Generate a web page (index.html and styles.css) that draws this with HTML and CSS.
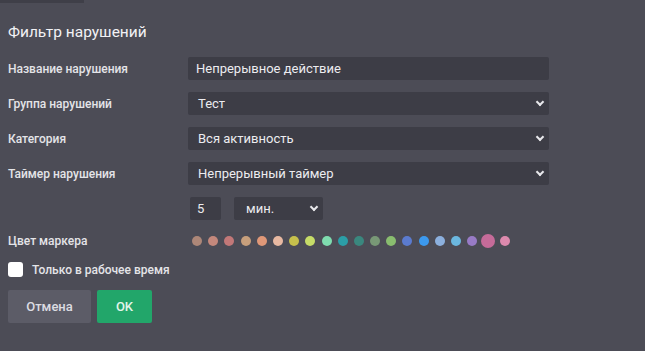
FILE: index.html
```html
<!DOCTYPE html>
<html lang="ru">
<head>
    <meta charset="UTF-8">
    <meta name="viewport" content="width=device-width, initial-scale=1.0">
    <title>Фильтр нарушений</title>
    <link rel="stylesheet" href="styles.css">
</head>
<body>
    <div class="tabline"><span class="tab"></span></div>
    <div class="dialog">
        <h2>Фильтр нарушений</h2>

        <div class="form">
            <label>Название нарушения</label>
            <div class="field">Непрерывное действие</div>

            <label>Группа нарушений</label>
            <div class="field select">Тест</div>

            <label>Категория</label>
            <div class="field select">Вся активность</div>

            <label>Таймер нарушения</label>
            <div class="field select">Непрерывный таймер</div>

            <span></span>
            <div class="timer">
                <div class="field num">5</div>
                <div class="field select unit">мин.</div>
            </div>

            <label class="color-label">Цвет маркера</label>
            <div class="colors">
                <span class="dot" style="background:#ad8778"></span>
                <span class="dot" style="background:#c4887c"></span>
                <span class="dot" style="background:#c27878"></span>
                <span class="dot" style="background:#c79f7c"></span>
                <span class="dot" style="background:#e09878"></span>
                <span class="dot" style="background:#e8b9a2"></span>
                <span class="dot" style="background:#c6c04c"></span>
                <span class="dot" style="background:#c6dc68"></span>
                <span class="dot" style="background:#7fdcaf"></span>
                <span class="dot" style="background:#2b9ea7"></span>
                <span class="dot" style="background:#3a877e"></span>
                <span class="dot" style="background:#789876"></span>
                <span class="dot" style="background:#89bd6f"></span>
                <span class="dot" style="background:#5b7bcf"></span>
                <span class="dot" style="background:#3c99ee"></span>
                <span class="dot" style="background:#8cb0de"></span>
                <span class="dot" style="background:#6bb7df"></span>
                <span class="dot" style="background:#987bc6"></span>
                <span class="dot big" style="background:#c56b99"></span>
                <span class="dot" style="background:#dd8aae"></span>
            </div>
        </div>

        <label class="check"><span class="box"></span>Только в рабочее время</label>

        <div class="buttons">
            <button class="btn cancel">Отмена</button>
            <button class="btn ok">OK</button>
        </div>
    </div>
</body>
</html>
```

FILE: styles.css
```css
body {
    margin: 0;
    background-color: #4c4c56;
    font-family: Roboto, "Liberation Sans", sans-serif;
    color: #e6e6ea;
    height: 351px;
    overflow: hidden;
}
.tabline {
    height: 3px;
}
.tab {
    display: block;
    width: 84px;
    height: 3px;
    background: #3f3f48;
}
.dialog {
    padding: 0 8px;
}
h2 {
    margin: 19px 0 0 0;
    font-size: 15.5px;
    line-height: 20px;
    font-weight: 400;
    color: #f2f2f5;
}
.form {
    display: grid;
    grid-template-columns: 180px 361px;
    row-gap: 12px;
    margin-top: 15px;
    align-items: center;
}
.form label {
    font-size: 12px;
    font-weight: 500;
    color: #e4e4e8;
}
.field {
    height: 23px;
    line-height: 23px;
    background: #3d3d46;
    border-radius: 2px;
    padding: 0 8px;
    font-size: 13px;
    color: #ececf0;
    box-sizing: border-box;
}
.select {
    position: relative;
    padding-left: 10px;
}
.select::after {
    content: "";
    position: absolute;
    right: 6px;
    top: 7px;
    width: 4px;
    height: 4px;
    border-right: 2px solid #e8e8ec;
    border-bottom: 2px solid #e8e8ec;
    transform: rotate(45deg);
}
.timer {
    display: flex;
    gap: 13px;
    padding-left: 2px;
}
.num {
    width: 31px;
    padding-left: 7px;
}
.unit {
    width: 89px;
    padding-left: 12px;
}
.colors {
    display: flex;
    align-items: center;
    gap: 6.2px;
    height: 14px;
    padding-left: 4px;
    margin-top: 2px;
}
.color-label {
    margin-top: 2px;
}
.dot {
    width: 10px;
    height: 10px;
    border-radius: 50%;
    flex: none;
}
.dot.big {
    width: 14px;
    height: 14px;
    margin: 0 -2px;
}
.check {
    display: flex;
    align-items: center;
    gap: 9px;
    margin-top: 14px;
    font-size: 12px;
    font-weight: 500;
    color: #e4e4e8;
}
.box {
    width: 15px;
    height: 15px;
    background: #fff;
    border-radius: 3px;
}
.buttons {
    display: flex;
    gap: 6px;
    margin-top: 13px;
}
.btn {
    height: 33px;
    border: none;
    border-radius: 2px;
    font-family: inherit;
    font-size: 13px;
    font-weight: 500;
}
.cancel {
    width: 83px;
    background: #5c5c67;
    color: #dcdce2;
}
.ok {
    width: 55px;
    background: #22a66a;
    color: #e2f5ea;
}
```
